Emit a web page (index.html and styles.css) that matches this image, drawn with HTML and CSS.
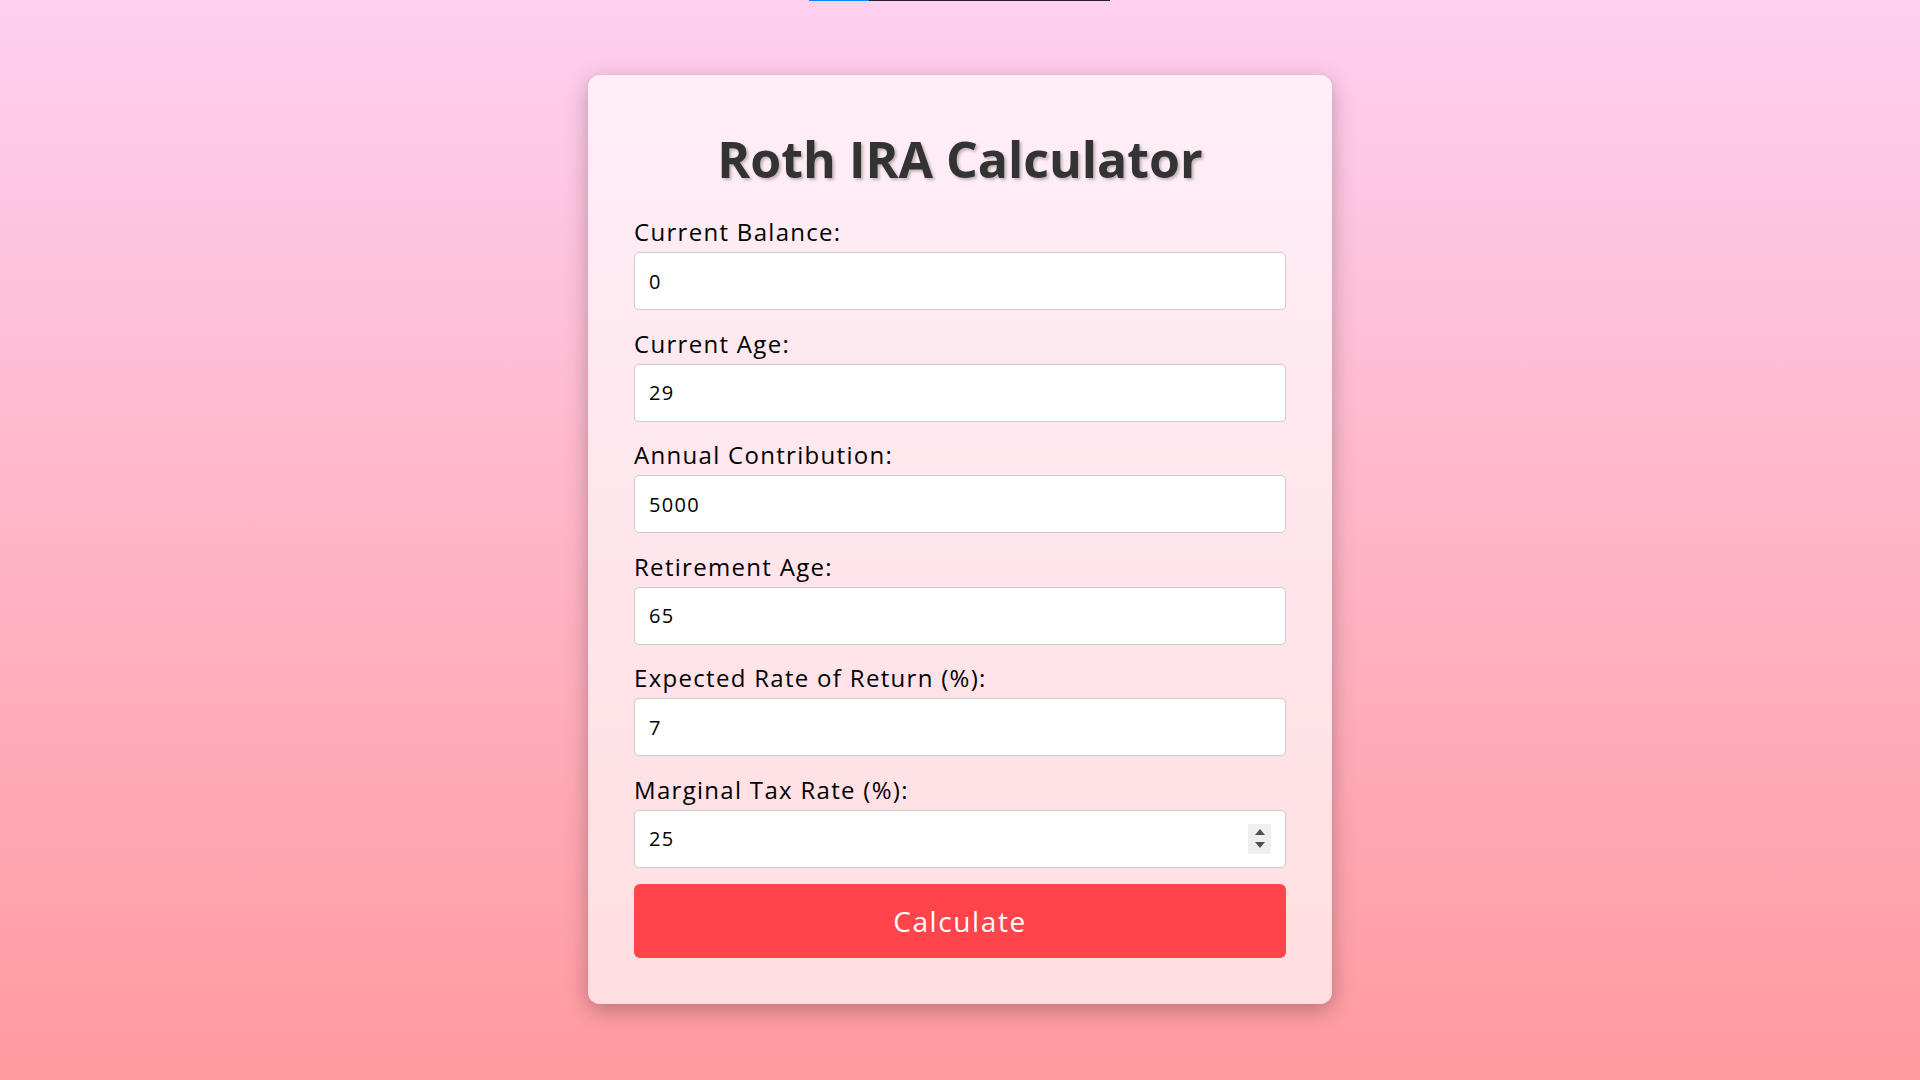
FILE: index.html
```html
<!DOCTYPE html>
<html>
<head>
    <link rel="stylesheet" href="styles.css">
</head>

<body>

    <div class="loader"><span class="loader-fill"></span></div>

    <div class="page">
        <div class="calculator">
            <h1>Roth IRA Calculator</h1>

            <label for="balance">Current Balance:</label>
            <input type="text" id="balance" value="0">

            <label for="age">Current Age:</label>
            <input type="text" id="age" value="29">

            <label for="contribution">Annual Contribution:</label>
            <input type="text" id="contribution" value="5000">

            <label for="retire">Retirement Age:</label>
            <input type="text" id="retire" value="65">

            <label for="rate">Expected Rate of Return (%):</label>
            <input type="text" id="rate" value="7">

            <label for="tax">Marginal Tax Rate (%):</label>
            <div class="number-field">
                <input type="text" id="tax" value="25">
                <span class="spinner">
                    <span class="arrow-up"></span>
                    <span class="arrow-down"></span>
                </span>
            </div>

            <button class="calc-btn">Calculate</button>
        </div>
    </div>

</body>

</html>
```

FILE: styles.css
```css
* {
    box-sizing: border-box;
}

body {
    margin: 0;
    min-height: 100vh;
    font-family: "Open Sans", "Liberation Sans", sans-serif;
    background-image: linear-gradient(to top, #ff9a9e 0%, #fecfef 99%, #fecfef 100%);
}

.loader {
    position: absolute;
    top: 0;
    left: 809px;
    width: 301px;
    height: 1px;
    background-color: #222;
}

.loader-fill {
    display: block;
    width: 60px;
    height: 100%;
    background-color: #0a84ff;
}

.page {
    display: flex;
    justify-content: center;
    padding-top: 75px;
}

.calculator {
    width: 744px;
    padding: 46px;
    border-radius: 12px;
    background-color: rgba(255, 255, 255, 0.66);
    box-shadow: 0 6px 22px rgba(0, 0, 0, 0.28);
}

h1 {
    margin: 3px 0 23px;
    text-align: center;
    font-size: 50px;
    line-height: 70px;
    font-weight: 700;
    color: #333;
    text-shadow: 2px 2px 3px rgba(0, 0, 0, 0.25);
}

label {
    display: block;
    font-size: 24px;
    line-height: 30px;
    margin-bottom: 5px;
    letter-spacing: 1.3px;
    color: #000;
}

input {
    display: block;
    width: 100%;
    height: 58px;
    margin: 0 0 18.5px;
    padding: 0 14px;
    border: 1px solid #ccc;
    border-radius: 5px;
    background-color: #fff;
    font-family: inherit;
    font-size: 20px;
    letter-spacing: 1.3px;
    color: #000;
    outline: none;
}

.number-field {
    position: relative;
}

.number-field input {
    margin-bottom: 16px;
}

.spinner {
    position: absolute;
    top: 14px;
    right: 15px;
    width: 23px;
    height: 30px;
    background-color: #efefef;
    display: flex;
    flex-direction: column;
    align-items: center;
    justify-content: center;
    gap: 7px;
}

.arrow-up {
    width: 0;
    height: 0;
    border-left: 5.5px solid transparent;
    border-right: 5.5px solid transparent;
    border-bottom: 6px solid #505050;
}

.arrow-down {
    width: 0;
    height: 0;
    border-left: 5.5px solid transparent;
    border-right: 5.5px solid transparent;
    border-top: 6px solid #505050;
}

.calc-btn {
    display: block;
    width: 100%;
    height: 74px;
    border: none;
    border-radius: 6px;
    background-color: #ff444b;
    color: #fff;
    font-family: inherit;
    font-size: 28px;
    font-weight: 500;
    letter-spacing: 1.6px;
    cursor: pointer;
}
```
